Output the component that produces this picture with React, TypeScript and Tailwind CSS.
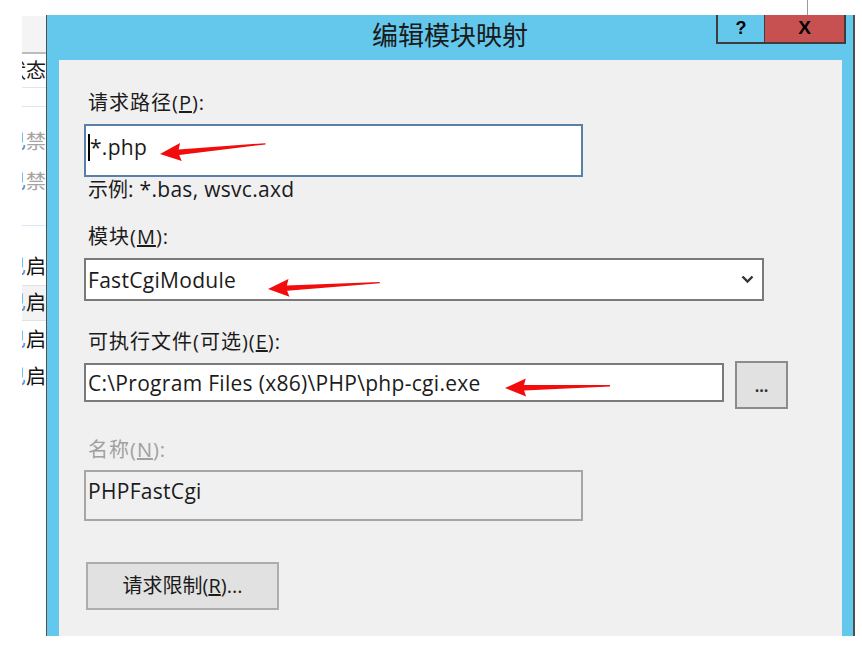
import React from "react";

function Arrow({ x, y, len, angle }: { x: number; y: number; len: number; angle: number }) {
  return (
    <g transform={`translate(${x} ${y}) rotate(${angle})`}>
      <polygon
        points={`0,0 21,-9 19,-2.6 ${len},-0.9 ${len},0.4 19,2.8 21,9`}
        fill="#f20c0c"
      />
    </g>
  );
}

function BgRow({ h, text, dim, className }: { h: number; text?: string; dim?: boolean; className?: string }) {
  return (
    <div
      className={`flex items-center justify-end whitespace-nowrap text-[20px] leading-none ${dim ? "text-[#a3a3a3]" : "text-[#111]"} ${className ?? ""}`}
      style={{ height: h }}
    >
      {text && (
        <>
          <span className="text-[#5b8fd0]">已</span>
          <span>{text}</span>
        </>
      )}
    </div>
  );
}

function Label({ children, dim }: { children: React.ReactNode; dim?: boolean }) {
  return (
    <div className={`h-[24px] leading-[24px] text-[20px] tracking-[1px] pl-[4px] whitespace-nowrap ${dim ? "text-[#a0a0a0]" : "text-[#1b1b1b]"}`}>
      {children}
    </div>
  );
}

export default function App() {
  return (
    <div className="relative w-[862px] h-[656px] overflow-hidden bg-white font-['Open_Sans','Noto_Sans_CJK_SC',sans-serif] text-[#1b1b1b]">
      {/* window behind the dialog, only its right edge shows */}
      <div className="ml-[22px] w-[24px] overflow-hidden pt-[16px]">
        <div className="h-[38px] bg-[#f4f4f4] border-b-2 border-[#bcbcbc]" />
        <div className="flex items-center justify-end whitespace-nowrap text-[20px] leading-none h-[34px] border-b border-[#e4e4e4]">
          状态
        </div>
        <div className="h-[19px] border-b border-[#dbe7f4]" />
        <div className="h-[15px]" />
        <BgRow h={40} text="禁" dim />
        <BgRow h={40} text="禁" dim />
        <div className="h-[24px] border-b border-[#dbe7f4]" />
        <div className="h-[22px]" />
        <BgRow h={38} text="启" className="border-b border-[#e2e2e2]" />
        <BgRow h={35} text="启" className="bg-[#f3f3f3] border-b border-[#e2e2e2]" />
        <BgRow h={37} text="启" />
        <BgRow h={38} text="启" />
      </div>
      <div className="absolute left-[807px] top-0 w-[41px] h-[16px] border-l border-b border-[#9a9a9a]" />

      {/* dialog */}
      <div className="absolute left-[46px] top-[15px] w-[809px] h-[621px] flex flex-col bg-[#63c8eb] border-l border-l-[#4f4f4f] border-r-2 border-r-[#4f4f4f]">
        <div className="relative h-[45px] flex items-center justify-center pb-[7px]">
          <span className="text-[26px] leading-none font-['Noto_Sans_CJK_SC',sans-serif] text-[#1a1a1a]">编辑模块映射</span>
          <div className="absolute right-[7px] top-0 flex h-[29px] border-2 border-t-0 border-[#3d3d3d]">
            <div className="w-[47px] flex items-center justify-center border-r border-[#3d3d3d] font-['Liberation_Sans',sans-serif] font-bold text-[18px] text-black">
              ?
            </div>
            <div className="w-[79px] bg-[#c75050] flex items-center justify-center font-['Liberation_Sans',sans-serif] font-bold text-[19px] text-black">
              X
            </div>
          </div>
        </div>

        <div className="flex-1 ml-[12px] mr-[11px] bg-[#f0f0f0] pl-[25px] pt-[31px] flex flex-col items-start">
          <Label>
            请求路径(<span className="underline">P</span>):
          </Label>
          <div className="mt-[9px] w-[499px] h-[53px] bg-white border-2 border-[#5a7fa8] flex items-start pl-[2px] pt-[7px]">
            <span className="w-[2px] h-[27px] bg-black mt-[1px]" />
            <span className="text-[21px] leading-[28px] tracking-[0.3px]">*.php</span>
          </div>
          <div className="h-[24px] leading-[24px] text-[20px] pl-[4px] whitespace-nowrap">
            示例<span className="text-[21px] tracking-[0.3px]">: *.bas, wsvc.axd</span>
          </div>

          <div className="mt-[24px]">
            <Label>
              模块(<span className="underline">M</span>):
            </Label>
          </div>
          <div className="mt-[9px] w-[680px] h-[43px] bg-white border-2 border-[#7a7a7a] flex items-center justify-between pl-[2px] pr-[8px]">
            <span className="text-[21px] leading-[28px] tracking-[0.3px]">FastCgiModule</span>
            <svg width="13" height="9" viewBox="0 0 13 9">
              <polyline points="1.5,1.5 6.5,6.5 11.5,1.5" fill="none" stroke="#333" strokeWidth="2.4" />
            </svg>
          </div>

          <div className="mt-[29px]">
            <Label>
              可执行文件(可选)(<span className="underline">E</span>):
            </Label>
          </div>
          <div className="mt-[7px] flex items-start">
            <div className="mt-[2px] w-[640px] h-[39px] bg-white border-2 border-[#7a7a7a] flex items-center pl-[2px]">
              <span className="text-[21px] leading-[28px] tracking-[0.3px] whitespace-nowrap">C:\Program Files (x86)\PHP\php-cgi.exe</span>
            </div>
            <div className="ml-[11px] w-[53px] h-[48px] bg-[#e1e1e1] border-2 border-[#8c8c8c] flex items-center justify-center text-[16px] leading-none font-bold text-[#333] pt-[2px]">
              ...
            </div>
          </div>

          <div className="mt-[29px]">
            <Label dim>
              名称(<span className="underline">N</span>):
            </Label>
          </div>
          <div className="mt-[8px] w-[499px] h-[51px] bg-[#f0f0f0] border-2 border-[#a6a6a6] flex items-start pl-[2px] pt-[5px]">
            <span className="text-[21px] leading-[28px] tracking-[0.3px]">PHPFastCgi</span>
          </div>

          <div className="mt-[41px] ml-[2px] w-[193px] h-[48px] bg-[#e1e1e1] border-2 border-[#adadad] flex items-center justify-center text-[20px] leading-none">
            请求限制(<span className="underline">R</span>)...
          </div>
        </div>
      </div>

      {/* red annotation arrows */}
      <svg className="absolute inset-0 pointer-events-none" width="862" height="656">
        <Arrow x={160} y={154} len={106} angle={-5.4} />
        <Arrow x={268} y={289} len={112} angle={-3.1} />
        <Arrow x={505} y={388} len={105} angle={-1.1} />
      </svg>
    </div>
  );
}
